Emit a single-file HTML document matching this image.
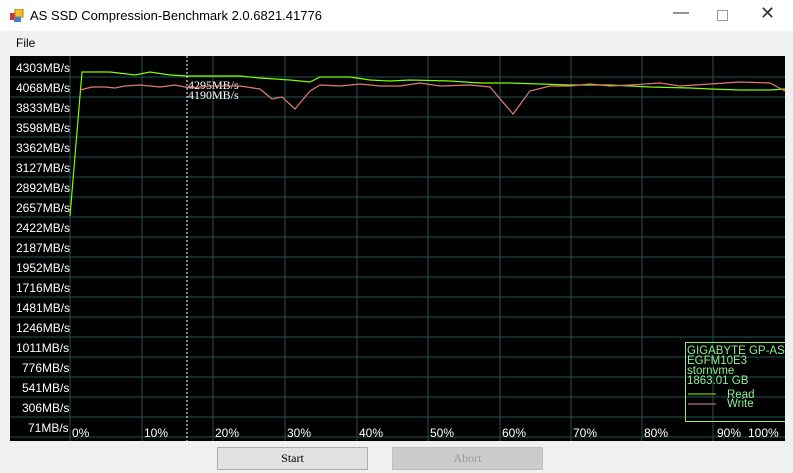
<!DOCTYPE html>
<html><head><style>
body{margin:0;width:793px;height:473px;background:#f0f0f0;font-family:"Liberation Sans",sans-serif;position:relative;overflow:hidden}
.t{position:absolute;left:0;top:0;width:793px;height:31px;background:#fff}
.t span{position:absolute;left:30px;top:8px;font-size:13px;color:#000}
.m{position:absolute;left:16px;top:36px;font-size:12px}
.btn{position:absolute;top:447px;height:21px;width:149px;border:1px solid #adadad;background:#e1e1e1;font-family:"Liberation Serif",serif;font-size:12px;text-align:center;line-height:21px}
</style></head><body>
<div class="t"><svg style="position:absolute;left:10px;top:9px" width="14" height="14"><rect x="0" y="4" width="6" height="7" fill="#c33"/><rect x="5" y="0" width="8" height="8" fill="#f3c02c" stroke="#a80"/><rect x="4" y="8" width="7" height="5" fill="#4a7fd0"/></svg><span>AS SSD Compression-Benchmark 2.0.6821.41776</span>
<span style="left:673px;top:4px;font-size:16px;color:#333">&#8212;</span>
<div style="position:absolute;left:717px;top:10px;width:9px;height:9px;border:1px solid #999"></div>
<span style="left:760px;top:3px;font-size:18px;color:#333">&#10005;</span></div>
<div class="m">File</div>
<svg style="position:absolute;left:10px;top:56px" width="775" height="385" font-family="Liberation Sans" font-size="12">
<rect width="775" height="385" fill="#000"/>
<g stroke="#205252" stroke-width="1">
<line x1="0" y1="21" x2="775" y2="21"/><line x1="0" y1="41" x2="775" y2="41"/><line x1="0" y1="61" x2="775" y2="61"/><line x1="0" y1="81" x2="775" y2="81"/><line x1="0" y1="101" x2="775" y2="101"/><line x1="0" y1="121" x2="775" y2="121"/><line x1="0" y1="141" x2="775" y2="141"/><line x1="0" y1="161" x2="775" y2="161"/><line x1="0" y1="181" x2="775" y2="181"/><line x1="0" y1="201" x2="775" y2="201"/><line x1="0" y1="221" x2="775" y2="221"/><line x1="0" y1="241" x2="775" y2="241"/><line x1="0" y1="261" x2="775" y2="261"/><line x1="0" y1="281" x2="775" y2="281"/><line x1="0" y1="301" x2="775" y2="301"/><line x1="0" y1="321" x2="775" y2="321"/><line x1="0" y1="341" x2="775" y2="341"/><line x1="0" y1="361" x2="775" y2="361"/><line x1="0" y1="381" x2="775" y2="381"/>
<line x1="60" y1="0" x2="60" y2="385"/><line x1="132" y1="0" x2="132" y2="385"/><line x1="203" y1="0" x2="203" y2="385"/><line x1="275" y1="0" x2="275" y2="385"/><line x1="347" y1="0" x2="347" y2="385"/><line x1="418" y1="0" x2="418" y2="385"/><line x1="490" y1="0" x2="490" y2="385"/><line x1="561" y1="0" x2="561" y2="385"/><line x1="632" y1="0" x2="632" y2="385"/><line x1="703" y1="0" x2="703" y2="385"/>
</g>
<g fill="#fff">
<text x="6" y="16">4303MB/s</text><text x="6" y="36">4068MB/s</text><text x="6" y="56">3833MB/s</text><text x="6" y="76">3598MB/s</text><text x="6" y="96">3362MB/s</text><text x="6" y="116">3127MB/s</text><text x="6" y="136">2892MB/s</text><text x="6" y="156">2657MB/s</text><text x="6" y="176">2422MB/s</text><text x="6" y="196">2187MB/s</text><text x="6" y="216">1952MB/s</text><text x="6" y="236">1716MB/s</text><text x="6" y="256">1481MB/s</text><text x="6" y="276">1246MB/s</text><text x="6" y="296">1011MB/s</text><text x="12" y="316">776MB/s</text><text x="12" y="336">541MB/s</text><text x="12" y="356">306MB/s</text><text x="18" y="376">71MB/s</text>
<text x="62" y="381">0%</text><text x="134" y="381">10%</text><text x="205" y="381">20%</text><text x="277" y="381">30%</text><text x="349" y="381">40%</text><text x="420" y="381">50%</text><text x="492" y="381">60%</text><text x="563" y="381">70%</text><text x="634" y="381">80%</text><text x="707" y="381">90%</text><text x="738" y="381">100%</text>
<text x="178" y="33" font-family="Liberation Serif">4295MB/s</text><text x="178" y="43" font-family="Liberation Serif">4190MB/s</text>
</g>
<line x1="177" y1="0" x2="177" y2="385" stroke="#fff" stroke-dasharray="2,2"/>
<polyline fill="none" stroke="#80ff00" stroke-width="1.2" points="60,160 72,16 100,16 125,19 140,16 160,19 178,20 200,20 230,20 250,22 280,24 300,26 310,21 340,21 360,24 380,25 400,24 440,25 470,27 500,27 530,28 560,29 600,29 640,31 680,32 700,33 730,34 760,34 775,33"/>
<polyline fill="none" stroke="#e07a7a" stroke-width="1.2" points="70,34 82,31 95,31 105,32 115,30 130,29 150,31 165,29 180,32 200,30 230,30 250,33 262,43 272,41 285,53 300,35 310,29 330,30 350,28 370,30 390,30 410,27 430,30 460,29 480,31 503,58 520,35 540,30 560,30 580,28 600,30 620,29 650,27 670,30 700,28 730,26 760,27 775,35"/>
<rect x="675.5" y="286.5" width="110" height="79" fill="none" stroke="#90ee60"/>
<g fill="#90ee90" font-size="11.5"><text x="677" y="298">GIGABYTE GP-ASM</text><text x="677" y="308">EGFM10E3</text><text x="677" y="318">stornvme</text><text x="677" y="328">1863.01 GB</text><text x="717" y="342">Read</text><text x="717" y="351">Write</text></g>
<line x1="678" y1="338" x2="706" y2="338" stroke="#80ff00"/><line x1="678" y1="348" x2="706" y2="348" stroke="#e89090"/>
</svg>
<div class="btn" style="left:217px">Start</div>
<div class="btn" style="left:392px;color:#9a9a9a;background:#ccc;border-color:#bfbfbf">Abort</div>
</body></html>
